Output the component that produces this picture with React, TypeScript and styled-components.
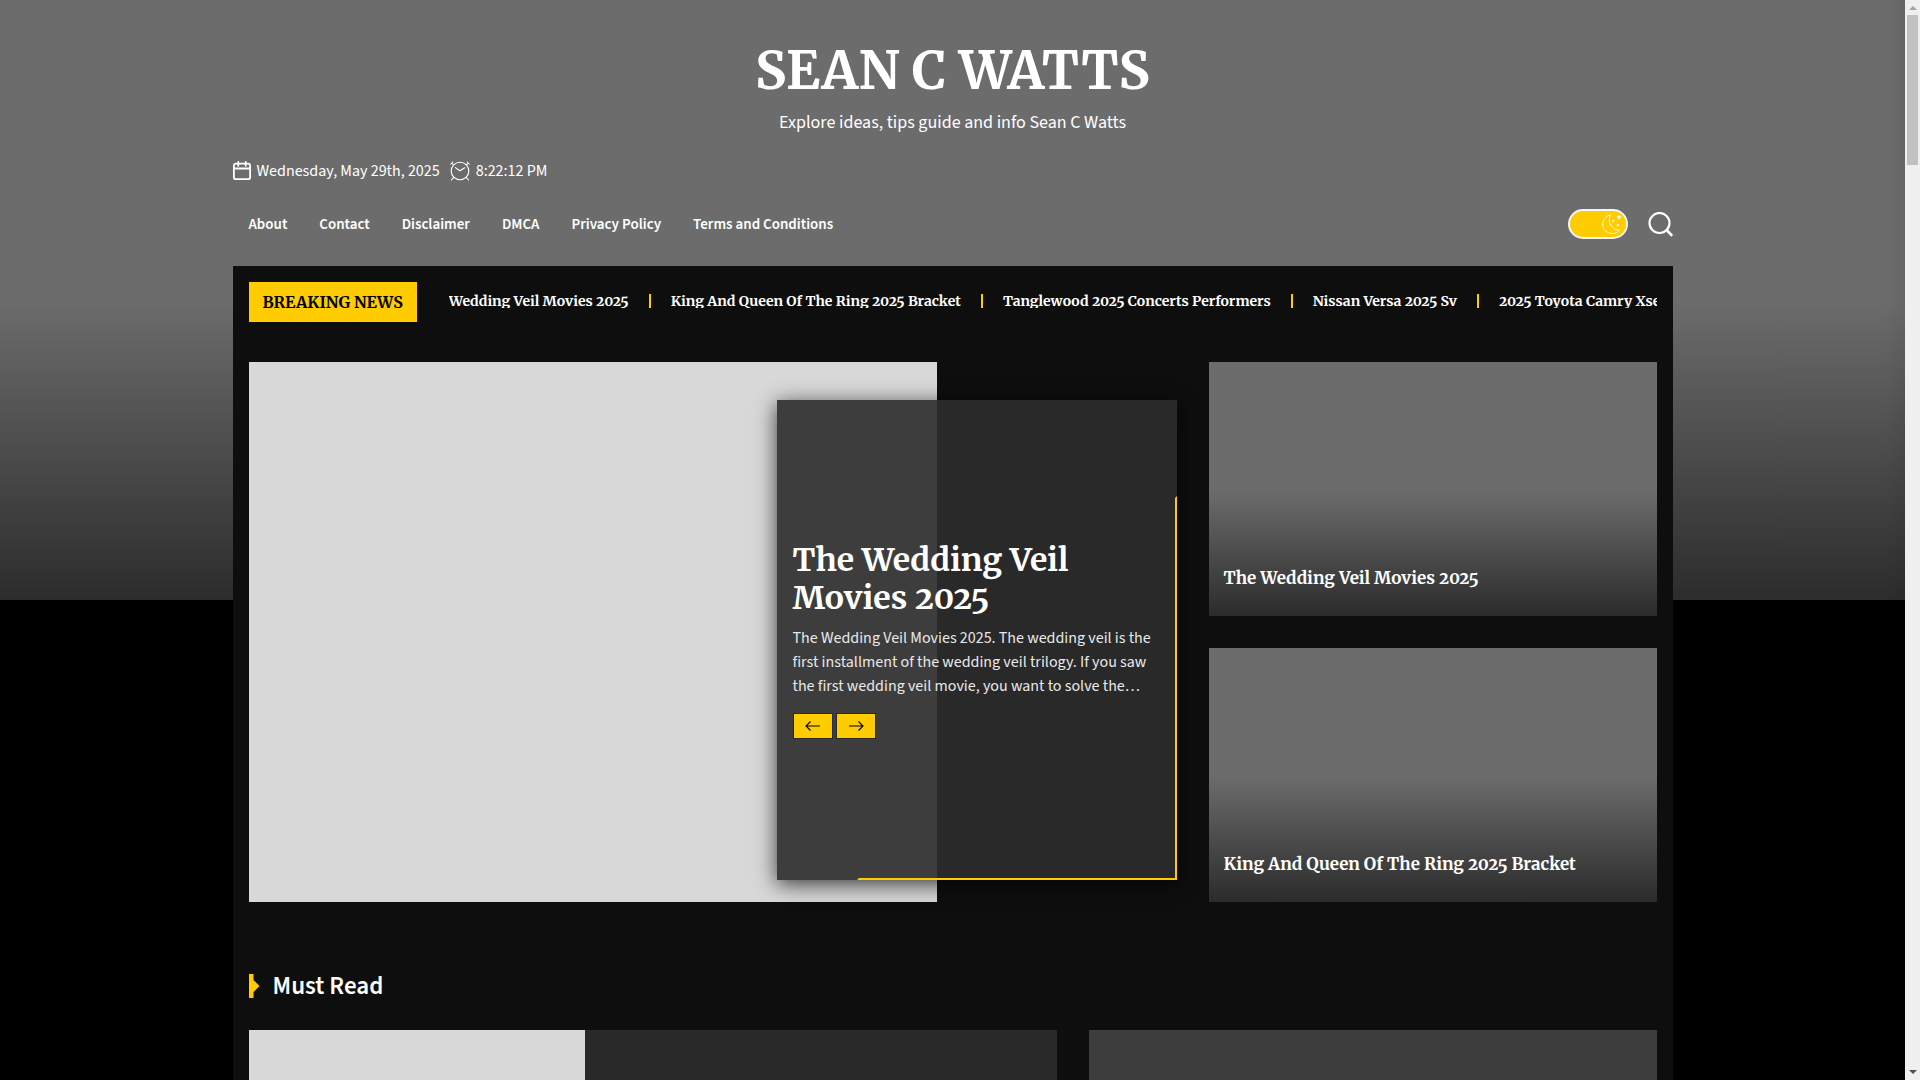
import React from "react";
import styled, { createGlobalStyle } from "styled-components";

const serif = `Merriweather, "DejaVu Serif Condensed", "DejaVu Serif", "Liberation Serif", serif`;
const sans = `"Source Sans 3", "Noto Sans CJK SC", "Noto Sans", sans-serif`;
const accent = "#ffcc00";

const GlobalStyle = createGlobalStyle`
  *, *::before, *::after { box-sizing: border-box; }
  body { margin: 0; background: #000; color: #fff; font-family: ${sans}; font-size: 16px; }
  a { color: inherit; text-decoration: none; }
  h1, h2, h3, p, ul { margin: 0; padding: 0; }
  button { font: inherit; cursor: pointer; }
`;

const Screen = styled.div`
  display: flex;
  height: 100vh;
  overflow: hidden;
`;

const Page = styled.div`
  flex: 1;
  min-width: 0;
  background: linear-gradient(to right, transparent calc(100% - 20px), rgba(0, 0, 0, 0.06)) no-repeat 0 0 / 100% 600px,
    linear-gradient(#6c6c6c 50%, #2c2c2c) no-repeat 0 0 / 100% 600px, #000;
`;

const Wrap = styled.div`
  width: 100%;
  max-width: 1440px;
  margin: 0 auto;
`;

const Branding = styled.header`
  padding-top: 37px;
  text-align: center;
`;

const SiteTitle = styled.h1`
  font: 700 52px/68px ${serif};
`;

const Tagline = styled.p`
  margin-top: 4px;
  font-size: 18px;
  line-height: 28px;
`;

const Meta = styled.div`
  display: flex;
  gap: 10px;
  margin-top: 20px;
  line-height: 28px;
`;

const MetaItem = styled.span`
  display: flex;
  align-items: center;
  gap: 6px;
`;

const NavBar = styled.div`
  display: flex;
  align-items: center;
  justify-content: space-between;
  height: 81px;
  padding-bottom: 3px;
`;

const Menu = styled.ul`
  display: flex;
  list-style: none;
  font-size: 15px;
  font-weight: 600;

  a {
    display: block;
    padding: 8px 16px;
  }
`;

const Tools = styled.div`
  display: flex;
  align-items: center;
  gap: 20px;
`;

const ModeToggle = styled.button`
  display: flex;
  align-items: center;
  justify-content: flex-end;
  width: 60px;
  height: 30px;
  padding: 0 4px;
  border: 2px solid #f5f5f5;
  border-radius: 15px;
  background: ${accent};
  color: #fff;
`;

const IconButton = styled.button`
  display: flex;
  padding: 0;
  border: 0;
  background: none;
  color: #fff;
`;

const Content = styled(Wrap).attrs({ as: "main" })`
  padding: 16px 16px 0;
  min-height: 900px;
  background: #0e0e0e;
`;

const Ticker = styled.section`
  display: flex;
  align-items: center;
  gap: 32px;
  height: 40px;
`;

const TickerLabel = styled.h2`
  flex: none;
  padding: 0 14px;
  background: ${accent};
  color: #000;
  font: 700 16px/40px ${serif};
`;

const TickerTrack = styled.ul`
  display: flex;
  flex: 1;
  min-width: 0;
  height: 14px;
  margin-bottom: 2px;
  overflow: hidden;
  list-style: none;
  white-space: nowrap;
  font: 700 14px/14px ${serif};
  font-variant-numeric: oldstyle-nums;
`;

const TickerItem = styled.li`
  flex: none;
  margin-right: 20px;
  padding-right: 20px;
  border-right: 2px solid ${accent};
`;

const Hero = styled.section`
  display: grid;
  grid-template-columns: minmax(0, 1fr) 448px;
  gap: 32px;
  margin-top: 40px;
`;

const Slide = styled.article`
  display: grid;
  grid-template-columns: minmax(0, 1fr) 160px 240px;
  height: 540px;
`;

const SlideImage = styled.div`
  grid-area: 1 / 1 / 2 / 3;
  background: #d8d8d8;
`;

const SlideCard = styled.div`
  position: relative;
  grid-area: 1 / 2 / 2 / 4;
  display: flex;
  flex-direction: column;
  justify-content: center;
  height: 480px;
  margin-top: 38px;
  padding: 0 16px;
  background: rgba(44, 44, 44, 0.9);
  box-shadow: 0 4px 20px rgba(0, 0, 0, 0.75);

  &::after {
    content: "";
    position: absolute;
    right: 0;
    bottom: 0;
    width: 80%;
    height: 80%;
    border: 2px solid transparent;
    border-right-color: ${accent};
    border-bottom-color: ${accent};
    pointer-events: none;
  }
`;

const SlideTitle = styled.h2`
  font: 700 32px/38px ${serif};
  font-variant-numeric: oldstyle-nums;
`;

const Excerpt = styled.p`
  margin: 9px 0 15px;
  color: #e8e8e8;
  line-height: 24px;
`;

const Arrows = styled.div`
  position: relative;
  z-index: 1;
  display: flex;
  gap: 3px;
`;

const ArrowButton = styled.button`
  display: flex;
  align-items: center;
  justify-content: center;
  width: 40px;
  height: 26px;
  padding: 0;
  border: 1px solid #292929;
  background: ${accent};
  color: #000;
`;

const Stack = styled.div`
  display: grid;
  grid-template-rows: 1fr 1fr;
  gap: 32px;
`;

const StoryTile = styled.article`
  display: flex;
  align-items: flex-end;
  padding: 0 15px 26px;
  background: linear-gradient(#6c6c6c 50%, #2c2c2c);
`;

const StoryTitle = styled.h3`
  font: 700 17px/24px ${serif};
  font-variant-numeric: oldstyle-nums;
`;

const SectionTitle = styled.h2`
  display: flex;
  align-items: center;
  gap: 13px;
  margin: 64px 0 24px;
  font: 600 25px/40px ${sans};
`;

const Marker = styled.span`
  width: 11px;
  height: 24px;
  background: ${accent};
  clip-path: polygon(0 0, 5px 0, 5px 6px, 11px 12px, 5px 18px, 5px 100%, 0 100%);
`;

const MustRead = styled.section`
  display: grid;
  grid-template-columns: minmax(0, 808fr) minmax(0, 568fr);
  gap: 32px;
  height: 320px;
`;

const ListCard = styled.article`
  display: grid;
  grid-template-columns: 336px 1fr;
  background: #292929;
`;

const Thumb = styled.div`
  background: #d8d8d8;
`;

const SideCard = styled.article`
  background: #3d3d3d;
`;

const ScrollRail = styled.aside`
  display: flex;
  flex: none;
  flex-direction: column;
  justify-content: space-between;
  width: 15px;
  padding: 6px 2px;
  background: #f0f0f0;
`;

const ScrollArrow = styled.span<{ $down?: boolean }>`
  align-self: center;
  border: 4px solid transparent;
  ${(p) => (p.$down ? "border-top-color: #505050; border-bottom: 0;" : "border-bottom-color: #a3a3a3; border-top: 0;")}
`;

const ScrollThumb = styled.span`
  height: 150px;
  margin: 5px 0 auto;
  background: #c1c1c1;
`;

const CalendarIcon = () => (
  <svg width="18" height="20" viewBox="0 0 18 20" fill="none" stroke="currentColor" strokeWidth="1.8" strokeLinecap="round" aria-hidden="true">
    <rect x="0.9" y="2.600" width="16.2" height="15.6" rx="2" />
    <path d="M1 7.500h16M5.3 1v3.800M12.7 1v3.800" />
  </svg>
);

const ClockIcon = () => (
  <svg width="20" height="20" viewBox="0 0 20 20" fill="none" stroke="currentColor" strokeWidth="1.1" strokeLinecap="round" aria-hidden="true">
    <circle cx="10" cy="10" r="8.8" />
    <path d="M5.4 6.6 9.8 9.8 14.8 6.8M3.6 16.6 1.4 19M16.4 16.6l2.2 2.4M.8 3.2 2.8 1M17.2 1l2 2.2M1.8 2.2l1.6 1.4M18.2 2.2l-1.6 1.4" />
  </svg>
);

const MoonIcon = () => (
  <svg width="20" height="20" viewBox="0 0 20 20" fill="none" stroke="currentColor" strokeWidth="0.9" strokeLinejoin="round" aria-hidden="true">
    <path d="M8.2.8C3.800 2 .8 5.600.8 10a9.300 9.300 0 0 0 16.600 6C11.500 16.500 5 10.500 8.200.8Z" />
    <g fill="currentColor" stroke="none">
      <path d="m17 .6.7 1.500 1.700.2-1.200 1.200.3 1.700-1.500-.8-1.500.8.3-1.700-1.200-1.200 1.700-.2z" />
      <path d="m11.500 5.200.4 1 1 .2-.7.8.1 1-.8-.5-1 .5.2-1-.7-.8 1-.2zM16 9.500l.5 1 1.100.2-.8.8.1 1.100-.9-.5-1 .5.1-1.100-.8-.8 1.200-.2z" />
    </g>
  </svg>
);

const SearchIcon = () => (
  <svg width="25" height="25" viewBox="0 0 25 25" fill="none" stroke="currentColor" strokeWidth="2.2" aria-hidden="true">
    <circle cx="11.5" cy="11" r="10" />
    <path d="m18.600 18 5.600 5.800" strokeWidth="2.600" />
  </svg>
);

const ArrowIcon = ({ next }: { next?: boolean }) => (
  <svg width="16" height="10" viewBox="0 0 16 10" fill="none" stroke="currentColor" strokeWidth="1.1" aria-hidden="true">
    <path d={next ? "M1 5h14M10.500.5 15 5l-4.500 4.500" : "M15 5H1M5.500.5 1 5l4.500 4.500"} />
  </svg>
);

const menu = ["About", "Contact", "Disclaimer", "DMCA", "Privacy Policy", "Terms and Conditions"];
const headlines = [
  "Wedding Veil Movies 2025",
  "King And Queen Of The Ring 2025 Bracket",
  "Tanglewood 2025 Concerts Performers",
  "Nissan Versa 2025 Sv",
  "2025 Toyota Camry Xse",
];
const stories = ["The Wedding Veil Movies 2025", "King And Queen Of The Ring 2025 Bracket"];

export default function App() {
  return (
    <Screen>
      <GlobalStyle />
      <Page>
        <Wrap>
          <Branding>
            <SiteTitle><a href="#home">SEAN C WATTS</a></SiteTitle>
            <Tagline>Explore ideas, tips guide and info Sean C Watts</Tagline>
          </Branding>
          <Meta>
            <MetaItem><CalendarIcon />Wednesday, May 29th, 2025</MetaItem>
            <MetaItem><ClockIcon />8:22:12 PM</MetaItem>
          </Meta>
          <NavBar>
            <nav>
              <Menu>
                {menu.map((m) => <li key={m}><a href="#page">{m}</a></li>)}
              </Menu>
            </nav>
            <Tools>
              <ModeToggle type="button" aria-label="Toggle dark mode"><MoonIcon /></ModeToggle>
              <IconButton type="button" aria-label="Search"><SearchIcon /></IconButton>
            </Tools>
          </NavBar>
        </Wrap>
        <Content>
          <Ticker>
            <TickerLabel>BREAKING NEWS</TickerLabel>
            <TickerTrack>
              {headlines.map((h) => <TickerItem key={h}><a href="#story">{h}</a></TickerItem>)}
            </TickerTrack>
          </Ticker>
          <Hero>
            <Slide>
              <SlideImage />
              <SlideCard>
                <SlideTitle><a href="#story">The Wedding Veil Movies 2025</a></SlideTitle>
                <Excerpt>
                  The Wedding Veil Movies 2025. The wedding veil is the first installment of the wedding veil trilogy. If you
                  saw the first wedding veil movie, you want to solve the…
                </Excerpt>
                <Arrows>
                  <ArrowButton type="button" aria-label="Previous"><ArrowIcon /></ArrowButton>
                  <ArrowButton type="button" aria-label="Next"><ArrowIcon next /></ArrowButton>
                </Arrows>
              </SlideCard>
            </Slide>
            <Stack>
              {stories.map((s) => (
                <StoryTile key={s}><StoryTitle><a href="#story">{s}</a></StoryTitle></StoryTile>
              ))}
            </Stack>
          </Hero>
          <SectionTitle><Marker />Must Read</SectionTitle>
          <MustRead>
            <ListCard><Thumb /></ListCard>
            <SideCard />
          </MustRead>
        </Content>
      </Page>
      <ScrollRail aria-hidden="true">
        <ScrollArrow />
        <ScrollThumb />
        <ScrollArrow $down />
      </ScrollRail>
    </Screen>
  );
}
